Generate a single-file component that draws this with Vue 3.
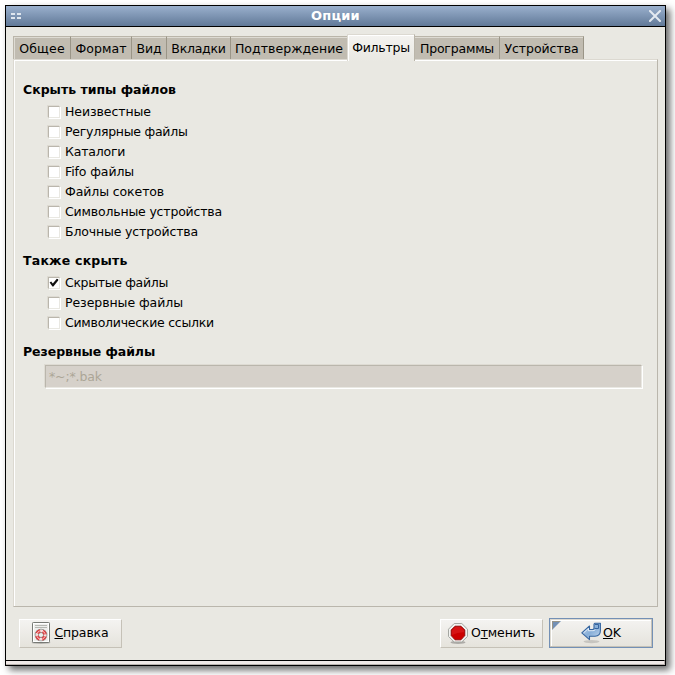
<script setup>
import { reactive, ref } from 'vue'

const tabs = [
  { label: 'Общее', width: 58, track: 0.2 },
  { label: 'Формат', width: 61, track: 0.05 },
  { label: 'Вид', width: 35, track: -0.1 },
  { label: 'Вкладки', width: 64, track: -0.25 },
  { label: 'Подтверждение', width: 116, track: 0.05 },
  { label: 'Фильтры', width: 68, track: -0.25 },
  { label: 'Программы', width: 85, track: -0.2 },
  { label: 'Устройства', width: 84, track: -0.05 },
]
const active = ref(5)

const groups = reactive([
  {
    title: 'Скрыть типы файлов',
    track: 0,
    items: [
      { label: 'Неизвестные', on: false, track: -0.08 },
      { label: 'Регулярные файлы', on: false, track: -0.26 },
      { label: 'Каталоги', on: false, track: -0.2 },
      { label: 'Fifo файлы', on: false, track: -0.1 },
      { label: 'Файлы сокетов', on: false, track: -0.1 },
      { label: 'Символьные устройства', on: false, track: -0.18 },
      { label: 'Блочные устройства', on: false, track: -0.15 },
    ],
  },
  {
    title: 'Также скрыть',
    track: 0.22,
    items: [
      { label: 'Скрытые файлы', on: true, track: -0.33 },
      { label: 'Резервные файлы', on: false, track: -0.06 },
      { label: 'Символические ссылки', on: false, track: -0.25 },
    ],
  },
])
</script>

<template>
  <div class="desktop">
    <div class="window">
      <header class="titlebar">
        <svg class="grip" width="10" height="6" shape-rendering="crispEdges">
          <path d="M0 0h4v2H0zM6 0h4v2H6zM0 4h4v2H0zM6 4h4v2H6z" fill="#dfe6ee" />
        </svg>
        <span class="title">Опции</span>
        <svg class="close" width="12" height="12" viewBox="0 0 12 12">
          <path d="M1 1L11 11M11 1L1 11" stroke="#e3e9f0" stroke-width="2" stroke-linecap="square" />
        </svg>
      </header>

      <main class="body">
        <nav class="tabs">
          <button
            v-for="(t, i) in tabs"
            :key="t.label"
            class="tab"
            :class="{ active: i === active, first: i === 0, before: i === active - 1 }"
            :style="{ width: t.width + 'px', letterSpacing: t.track + 'px' }"
            @click="active = i"
          >{{ t.label }}</button>
        </nav>

        <section class="panel">
          <div v-for="g in groups" :key="g.title" class="group">
            <h2 :style="{ letterSpacing: g.track + 'px' }">{{ g.title }}</h2>
            <label v-for="it in g.items" :key="it.label" class="row" @click="it.on = !it.on">
              <span class="box">
                <svg v-if="it.on" width="10" height="10" viewBox="0 0 10 10">
                  <path d="M.6 4.6L2.2 3.6L3.8 5.4L7.8 .8L9.2 1.2V2.6L4.4 8.6H3.4Z" fill="#111" />
                </svg>
              </span>
              <span :style="{ letterSpacing: it.track + 'px' }">{{ it.label }}</span>
            </label>
          </div>
          <div class="group">
            <h2 class="tight">Резервные файлы</h2>
            <div class="entry">*~;*.bak</div>
          </div>
        </section>

        <footer class="actions">
          <button class="btn help">
            <svg width="20" height="22" viewBox="0 0 20 22">
              <ellipse cx="10" cy="20.8" rx="9.5" ry="1.1" fill="#000" opacity=".22" />
              <rect x="1.5" y=".5" width="17" height="20" rx=".8" fill="#eeeeec" stroke="#777a75" />
              <rect x="2.5" y="1.5" width="15" height="18" fill="none" stroke="#fff" />
              <path d="M4 3.5h12M4 5.5h12" stroke="#b5b7b2" />
              <circle cx="10" cy="13" r="4.2" fill="none" stroke="#8b8d89" stroke-width="4.2" />
              <circle cx="10" cy="13" r="4.2" fill="none" stroke="#f6f6f5" stroke-width="2.6" />
              <circle cx="10" cy="13" r="4.2" fill="none" stroke="#e0383c" stroke-width="3.4" stroke-dasharray="4 2.597" stroke-dashoffset="-1.3" />
              <circle cx="10" cy="13" r="4.2" fill="none" stroke="#f6c6c6" stroke-width="1" />
            </svg>
            <span><u>С</u>правка</span>
          </button>
          <span class="spacer"></span>
          <button class="btn cancel">
            <svg width="22" height="22" viewBox="0 0 22 22">
              <ellipse cx="11" cy="20.4" rx="7.5" ry="1.5" fill="#000" opacity=".25" />
              <path d="M7.2 1.5h7.6L20.5 7.2v7.3L14.8 20H7.2L1.5 14.5V7.2Z" fill="#f2f2f0" stroke="#a5a7a2" />
              <path d="M8 4.2h6L17.8 8v5.6L14 17.8H8L4.2 13.6V8Z" fill="#cc0000" stroke="#8e0505" stroke-width=".9" />
              <path d="M8.3 5h5.4L17 8.3v2Q11 10 5 13V8.3Z" fill="#e0282a" opacity=".5" />
            </svg>
            <span>О<u>т</u>менить</span>
          </button>
          <button class="btn ok">
            <svg class="corner" width="9" height="9" viewBox="0 0 9 9">
              <path d="M0 0H9L0 9Z" fill="#7390b5" />
              <path d="M.5 8V.5H8" fill="none" stroke="#9a9587" />
            </svg>
            <svg width="20" height="22" viewBox="0 0 20 22">
              <defs>
                <linearGradient id="arrow" x1="0" y1="0" x2="1" y2="1">
                  <stop offset="0" stop-color="#d5e4f3" />
                  <stop offset=".5" stop-color="#86add7" />
                  <stop offset="1" stop-color="#c5d9ee" />
                </linearGradient>
              </defs>
              <ellipse cx="10.5" cy="19.6" rx="8" ry="1.6" fill="#000" opacity=".14" />
              <path d="M.8 10.8L8.5 4V7.6H11.5Q13 7.6 13 6V2.2L14 1.2H19.4V8.5Q19.4 14 14 14.2H8.5V17.6Z" fill="url(#arrow)" stroke="#36659f" stroke-width="1.1" stroke-linejoin="round" />
              <path d="M14 2.5H17.5V6.5H13.5" fill="none" stroke="#36659f" />
              <path d="M2.6 10.8L7.5 6.4V8.7H12Q14 8.6 14.2 7.6" fill="none" stroke="#eaf2fa" stroke-width=".9" />
            </svg>
            <span><u>O</u>K</span>
          </button>
        </footer>
      </main>
      <div class="sill"></div>
    </div>
  </div>
</template>

<style>
body {
  margin: 0;
  background: #fff;
  overflow: hidden;
}
</style>

<style scoped>
* {
  box-sizing: border-box;
}
.desktop {
  width: 675px;
  height: 675px;
  padding: 5px;
  overflow: hidden;
  background: #fff;
  color: #000;
  font: 12.5px/16px "DejaVu Sans", sans-serif;
}
.window {
  display: flex;
  flex-direction: column;
  width: 661px;
  height: 661px;
  border: 1px solid #000;
  background: #e9e8e2;
  box-shadow: 4px 4px 7px rgba(0, 0, 0, 0.6);
}
.titlebar {
  display: flex;
  align-items: center;
  height: 21px;
  padding: 0 4px 0 5px;
  border-bottom: 1px solid #000;
  background: linear-gradient(#9ab0cd, #617998);
}
.title {
  flex: 1;
  padding-left: 1px;
  color: #fff;
  font-size: 13px;
  font-weight: bold;
  letter-spacing: 0.2px;
  text-align: center;
}
.body {
  display: flex;
  flex: 1;
  flex-direction: column;
  min-height: 0;
  padding: 7px 7px 0;
}
.tabs {
  display: flex;
  align-items: flex-end;
  height: 25px;
}
button {
  margin: 0;
  padding: 0;
  border: 0;
  border-radius: 0;
  color: #000;
  font: inherit;
  white-space: nowrap;
}
.tab {
  flex: none;
  height: 23px;
  padding-top: 1px;
  border-top: 1px solid #bab5a9;
  border-right: 1px solid #9a9587;
  background: #c1bcb1;
  box-shadow: inset 0 1px #dedbd3;
}
.tab.first {
  border-left: 1px solid #bab5a9;
  box-shadow: inset 1px 1px #dedbd3;
}
.tab.before {
  border-right: 0;
}
.tab.active {
  position: relative;
  z-index: 1;
  height: 27px;
  margin-bottom: -2px;
  padding-top: 0;
  padding-bottom: 1px;
  border-top: 1px solid #dcd9d1;
  border-left: 1px solid #dcd9d1;
  border-right: 1px solid #bab5a9;
  background: linear-gradient(#f4f3f0, #e9e8e2);
  box-shadow: inset 1px 1px #fff;
}
.panel {
  height: 548px;
  padding: 21px 15px 0 9px;
  border: 1px solid #bab6ac;
  border-top-color: #dcd9d1;
  border-left-color: #dcd9d1;
  box-shadow: inset 1px 1px #fff;
}
.group {
  margin-bottom: 10px;
}
h2 {
  height: 21px;
  margin: 0;
  font-size: 12.5px;
  line-height: 18px;
}
.tight {
  letter-spacing: -0.06px;
}
.row {
  display: flex;
  align-items: center;
  gap: 5px;
  height: 20px;
  padding-left: 25px;
}
.box {
  width: 12px;
  height: 12px;
  border: 1px solid #bab6ac;
  border-right-color: #e9e8e2;
  border-bottom-color: #e9e8e2;
  background: #fff;
  box-shadow: 1px 1px #fff, -1px -1px #dedbd3;
}
.box svg {
  display: block;
}
.entry {
  height: 23px;
  margin: 1px 0 0 22px;
  padding: 3px 3px;
  border: 1px solid #bab6ac;
  border-right-color: #e9e8e2;
  border-bottom-color: #e9e8e2;
  background: #d6d1ca;
  box-shadow: 1px 1px #fff, -1px -1px #dedbd3;
  color: #aca697;
  letter-spacing: -0.15px;
}
.actions {
  display: flex;
  align-items: flex-start;
  padding: 11px 5px 0 6px;
}
.spacer {
  flex: 1;
}
.btn {
  display: flex;
  flex: none;
  align-items: center;
  justify-content: center;
  gap: 2px;
  height: 29px;
  margin-top: 1px;
  padding-bottom: 1px;
  border: 1px solid #fff;
  border-right-color: #c5c1b7;
  border-bottom-color: #c5c1b7;
  background: linear-gradient(#f4f3f1, #e5e3dc);
}
.help {
  gap: 3px;
  width: 103px;
  padding-right: 1px;
  letter-spacing: -0.15px;
}
.cancel {
  width: 103px;
  margin-right: 6px;
  padding-right: 1px;
  letter-spacing: -0.15px;
}
.ok {
  position: relative;
  width: 104px;
  height: 30px;
  margin-top: 0;
  padding-bottom: 0;
  border: 1px solid #7390b5;
  box-shadow: inset -1px -1px #c5c1b7, inset 1px 1px #dcd9d1, inset 2px 2px #fff;
}
.corner {
  position: absolute;
  top: 2px;
  left: 2px;
}
.sill {
  height: 5px;
  border-top: 1px solid #000;
  border-right: 1px solid #b9b2ae;
  border-bottom: 1px solid #b9b2ae;
  background: #f0e9e7;
}
</style>
